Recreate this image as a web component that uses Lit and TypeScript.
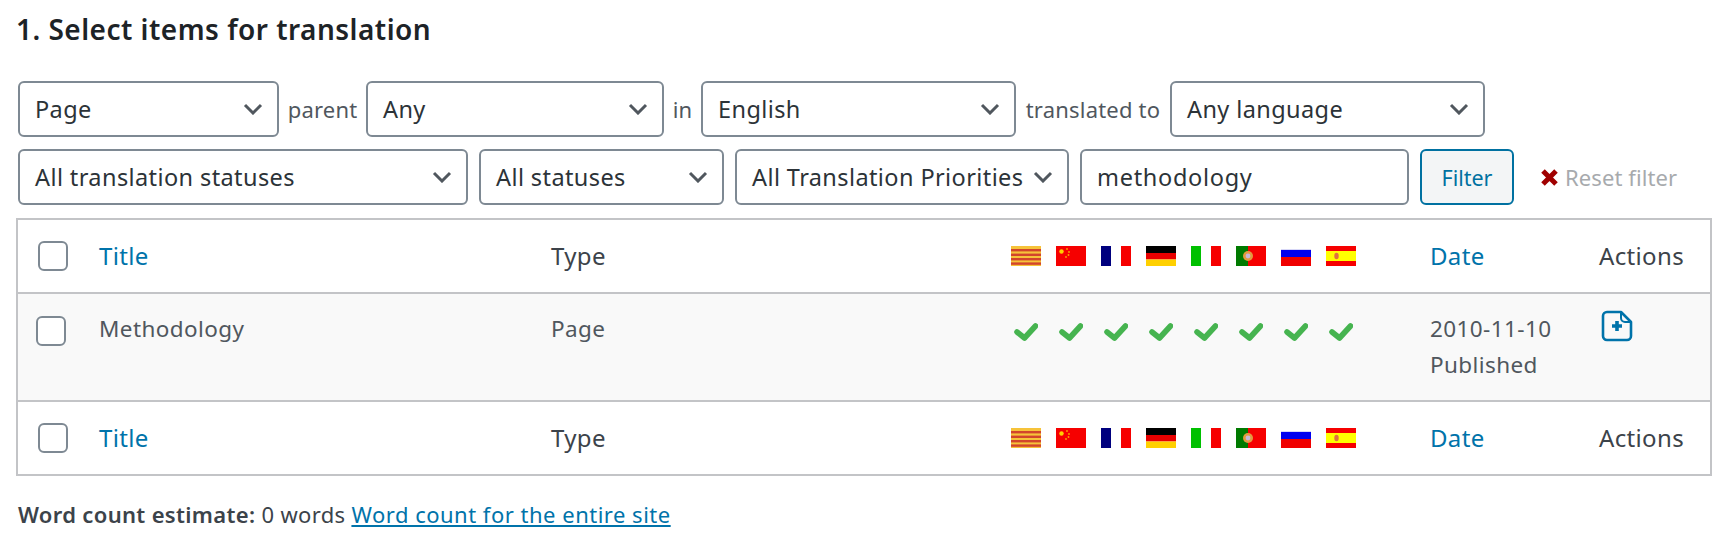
import { LitElement, html, css, svg } from "lit";
import { customElement } from "lit/decorators.js";

const flags = [
  svg`<rect width="30" height="20" fill="#f6c33a"/><rect y="3" width="30" height="2.4" fill="#d2452c"/><rect y="7.6" width="30" height="2.4" fill="#d2452c"/><rect y="12" width="30" height="2.4" fill="#d2452c"/><rect y="16.4" width="30" height="2.4" fill="#d2452c"/>`,
  svg`<rect width="30" height="20" fill="#f60000"/><circle cx="5.5" cy="5.5" r="2.2" fill="#ffd000"/><circle cx="11" cy="3" r=".9" fill="#f9a000"/><circle cx="13" cy="6" r=".9" fill="#f9a000"/><circle cx="12.5" cy="9" r=".9" fill="#f9a000"/><circle cx="10" cy="11" r=".9" fill="#f9a000"/>`,
  svg`<rect width="30" height="20" fill="#fff"/><rect width="10" height="20" fill="#00007e"/><rect x="20" width="10" height="20" fill="#f60000"/>`,
  svg`<rect width="30" height="7" fill="#000"/><rect y="7" width="30" height="6.5" fill="#e80000"/><rect y="13.5" width="30" height="6.5" fill="#ffd000"/>`,
  svg`<rect width="30" height="20" fill="#fff"/><rect width="10" height="20" fill="#00c000"/><rect x="20" width="10" height="20" fill="#f60000"/>`,
  svg`<rect width="30" height="20" fill="#f60000"/><rect width="12" height="20" fill="#007a00"/><circle cx="12" cy="10" r="5" fill="#e39a40"/><circle cx="12" cy="10" r="2.4" fill="#c8b8d8"/>`,
  svg`<rect width="30" height="20" fill="#fff"/><rect y="3.5" width="30" height="1" fill="#b0b0f0"/><rect y="4" width="30" height="8" fill="#0000f0"/><rect y="11" width="30" height="9" fill="#f00000"/>`,
  svg`<rect width="30" height="20" fill="#f60000"/><rect y="5" width="30" height="10" fill="#ffff00"/><ellipse cx="10.5" cy="10" rx="2.2" ry="3.2" fill="#e07040"/>`,
];

const flagStrip = html`<div class="strip">${flags.map(
  (f) => html`<span class="flag"><svg width="30" height="20" viewBox="0 0 30 20">${f}</svg></span>`
)}</div>`;

const check = html`<svg class="check" width="24" height="18" viewBox="0 0 24 18"><polyline points="3,9 10.5,15 21.5,3" fill="none" stroke="#46b450" stroke-width="5.6" stroke-linecap="round" stroke-linejoin="round"/></svg>`;

const chevron = html`<svg class="chev" width="20" height="12" viewBox="0 0 20 12"><polyline points="2,2 10,10 18,2" fill="none" stroke="#50575e" stroke-width="3"/></svg>`;

@customElement("app-root")
export class AppRoot extends LitElement {
  static styles = css`
    :host {
      display: block;
      width: 1729px;
      height: 540px;
      overflow: hidden;
      background: #fff;
      font-family: "Noto Sans", "Open Sans", sans-serif;
      font-size: 21px;
      color: #3c434a;
    }
    h2 {
      margin: 0;
      padding: 11px 0 0 16px;
      height: 69px;
      box-sizing: border-box;
      font-size: 28px;
      letter-spacing: 0.48px;
      line-height: 36px;
      font-weight: 600;
      color: #1d2327;
    }
    .filters {
      padding: 12px 0 0 18px;
      display: flex;
      flex-direction: column;
      gap: 12px;
    }
    .line {
      display: flex;
      align-items: center;
      height: 56px;
    }
    .sel,
    .input {
      box-sizing: border-box;
      height: 56px;
      border: 2px solid #7e8993;
      border-radius: 6px;
      display: flex;
      align-items: center;
      justify-content: space-between;
      padding: 0 14px 0 15px;
      color: #2c3338;
      flex: none;
      background: #fff;
      font-size: 23.5px;
      letter-spacing: 0.4px;
      white-space: nowrap;
    }
    .input {
      letter-spacing: 0.7px;
    }
    .lbl {
      flex: none;
      color: #50575e;
      text-align: center;
      font-size: 22px;
      letter-spacing: 0.2px;
      white-space: nowrap;
    }
    .btn {
      box-sizing: border-box;
      width: 94px;
      height: 56px;
      margin-left: 11px;
      border: 2px solid #0071a1;
      border-radius: 6px;
      background: #f3f5f6;
      color: #0071a1;
      display: flex;
      align-items: center;
      justify-content: center;
      font-size: 21.5px;
    }
    .reset {
      margin-left: 27px;
      color: #a7aaad;
      display: flex;
      align-items: center;
      gap: 7px;
      font-size: 22px;
      letter-spacing: 0.1px;
    }
    .table {
      margin: 13px 0 0 16px;
      width: 1696px;
      box-sizing: border-box;
      border: 2px solid #c3c4c7;
    }
    .row {
      display: grid;
      grid-template-columns: 81px 452px 460px 419px 169px 1fr;
      align-items: center;
      height: 72px;
      font-size: 24px;
      letter-spacing: 0.35px;
    }
    .row > span {
      margin-bottom: 2px;
    }
    .row.head {
      border-bottom: 2px solid #c3c4c7;
    }
    .row.body {
      height: 108px;
      background: #f9f9f9;
      align-items: start;
      border-bottom: 2px solid #c3c4c7;
      box-sizing: border-box;
      line-height: 36px;
      color: #50575e;
      font-size: 22.5px;
      letter-spacing: 0.4px;
    }
    .row.body > * {
      margin-top: 17px;
    }
    .cb {
      box-sizing: border-box;
      width: 30px;
      height: 30px;
      border: 2px solid #7e8993;
      border-radius: 6px;
      background: #fff;
      margin-left: 20px;
    }
    .row.body .cb {
      margin-left: 18px;
      margin-top: 22px;
    }
    .link {
      color: #0073aa;
    }
    .strip {
      display: flex;
      gap: 15px;
    }
    .flag {
      width: 30px;
      height: 20px;
      overflow: hidden;
      display: block;
    }
    .flag svg {
      display: block;
      filter: blur(0.5px);
    }
    .row.body .checks {
      display: flex;
      gap: 21px;
      margin-top: 29px;
      padding-left: 3px;
    }
    .check {
      display: block;
    }
    .row.body .icon {
      display: block;
      margin: 16px 0 0 2px;
    }
    .foot {
      margin: 23px 0 0 18px;
      line-height: 30px;
      font-size: 22px;
      letter-spacing: 0.33px;
      color: #3c434a;
    }
    .foot b {
      font-weight: 600;
    }
    .foot a {
      color: #0073aa;
      text-decoration: underline;
      letter-spacing: 0.5px;
    }
  `;

  private sel(w: number, text: string) {
    return html`<div class="sel" style="width:${w}px"><span>${text}</span>${chevron}</div>`;
  }

  private lbl(w: number, text: string) {
    return html`<span class="lbl" style="width:${w}px">${text}</span>`;
  }

  private headRow(cls: string) {
    return html`<div class="row ${cls}">
      <div class="cb"></div>
      <span class="link">Title</span>
      <span class="dark">Type</span>
      ${flagStrip}
      <span class="link">Date</span>
      <span class="dark">Actions</span>
    </div>`;
  }

  render() {
    return html`
      <h2>1. Select items for translation</h2>
      <div class="filters">
        <div class="line">
          ${this.sel(261, "Page")}${this.lbl(87, "parent")}${this.sel(298, "Any")}
          ${this.lbl(37, "in")}${this.sel(315, "English")}${this.lbl(154, "translated to")}
          ${this.sel(315, "Any language")}
        </div>
        <div class="line">
          ${this.sel(450, "All translation statuses")}
          <span style="width:11px"></span>
          ${this.sel(245, "All statuses")}
          <span style="width:11px"></span>
          ${this.sel(334, "All Translation Priorities")}
          <span style="width:11px"></span>
          <div class="input" style="width:329px">methodology</div>
          <div class="btn">Filter</div>
          <div class="reset">
            <svg width="17" height="17" viewBox="0 0 17 17"><path d="M2 2 L15 15 M15 2 L2 15" stroke="#a00000" stroke-width="5"/></svg>
            <span>Reset filter</span>
          </div>
        </div>
      </div>
      <div class="table">
        ${this.headRow("head")}
        <div class="row body">
          <div class="cb"></div>
          <span>Methodology</span>
          <span>Page</span>
          <div class="checks">${[0, 1, 2, 3, 4, 5, 6, 7].map(() => check)}</div>
          <span>2010-11-10<br />Published</span>
          <svg class="icon" width="32" height="32" viewBox="0 0 32 32">
            <path d="M6 2 H20 L30 12 V26 a4 4 0 0 1 -4 4 H6 a4 4 0 0 1 -4 -4 V6 a4 4 0 0 1 4 -4 Z" fill="none" stroke="#0073aa" stroke-width="2.6" stroke-linejoin="round"/>
            <path d="M20 2 V8 a4 4 0 0 0 4 4 H30" fill="none" stroke="#0073aa" stroke-width="2"/>
            <path d="M16 11 V21 M11 16 H21" stroke="#0073aa" stroke-width="3.6"/>
          </svg>
        </div>
        ${this.headRow("foot-row")}
      </div>
      <div class="foot"><b>Word count estimate:</b> 0 words <a>Word count for the entire site</a></div>
    `;
  }
}
